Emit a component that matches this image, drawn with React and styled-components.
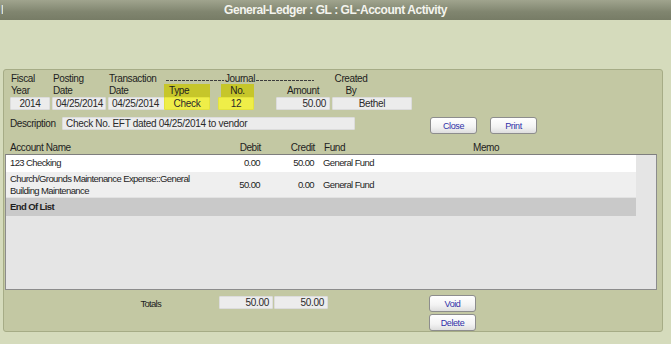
import React from 'react';
import styled, { createGlobalStyle } from 'styled-components';

const GlobalStyle = createGlobalStyle`
  body {
    margin: 0;
    background: #d5dbbc;
    font-family: "Liberation Sans", Arial, sans-serif;
    font-size: 10px;
    letter-spacing: -0.4px;
    color: #1e1e1e;
  }
`;

const TitleBar = styled.div`
  height: 20px;
  display: grid;
  grid-template-columns: 1fr auto 1fr;
  align-items: center;
  background: linear-gradient(#a0a48e, #80856f 60%, #777c66);
  color: #f4f4ee;
  font-weight: bold;
  font-size: 12px;
  letter-spacing: -0.45px;
`;

const Crumb = styled.span`
  justify-self: start;
  padding-left: 1px;
  font-weight: normal;
  overflow: hidden;
`;

const Panel = styled.div`
  margin: 49px 8px 0 3px;
  height: 261px;
  border: 1px solid #a6ac86;
  border-radius: 3px;
  background: #c3c8a3;
  display: flex;
  flex-direction: column;
`;

const FieldGroup = styled.div`
  display: flex;
  padding: 2px 0 0 6px;
`;

const Field = styled.div`
  display: flex;
  flex-direction: column;
  width: ${(p) => p.w}px;
  margin-left: ${(p) => p.gap || 0}px;
`;

const Label = styled.div`
  height: 25px;
  line-height: 12px;
  padding-top: 1px;
  box-sizing: border-box;
  text-align: ${(p) => p.align || 'left'};
  width: ${(p) => (p.lw ? p.lw + 'px' : 'auto')};
  padding-left: ${(p) => p.pl || 0}px;
`;

const LabelLine = styled.div`
  white-space: nowrap;
  text-align: ${(p) => p.align || 'inherit'};
  background: ${(p) => (p.mark ? '#c6c62a' : 'transparent')};
  margin-left: ${(p) => p.ml || 0}px;
  padding-left: ${(p) => p.pl || 0}px;
  padding-top: ${(p) => (p.mark ? 1 : 0)}px;
  height: ${(p) => (p.mark ? 14 : 12)}px;
  margin-top: ${(p) => (p.mark ? -1 : 0)}px;
  box-sizing: border-box;
`;

const Journal = styled.div`
  width: 148px;
  margin-left: 2px;
  display: flex;
  align-items: center;
  gap: 1px;
  &::before,
  &::after {
    content: '';
    flex: 1;
    height: 1px;
    margin-top: 2px;
    background: repeating-linear-gradient(90deg, #3c3c3c 0 3px, transparent 3px 4px);
  }
`;

const Input = styled.div`
  height: 13px;
  line-height: 12px;
  box-sizing: border-box;
  background: ${(p) => (p.mark ? '#efee48' : '#ececec')};
  border: 1px solid ${(p) => (p.mark ? '#e4e33c' : '#dcdcdc')};
  border-radius: 1px;
  padding: 0 3px;
  text-align: ${(p) => p.align || 'left'};
  white-space: nowrap;
  overflow: hidden;
  color: #2a2a2a;
  letter-spacing: -0.3px;
  width: ${(p) => (p.w ? p.w + 'px' : 'auto')};
`;

const DescRow = styled.div`
  display: flex;
  align-items: flex-start;
  padding: 7px 0 0 6px;
`;

const DescLabel = styled.span`
  width: 52px;
  line-height: 13px;
`;

const Button = styled.button`
  width: 47px;
  height: 17px;
  padding: 0;
  margin-left: ${(p) => p.gap || 0}px;
  border: 1px solid #8d8d8d;
  border-radius: 3px;
  background: linear-gradient(#ffffff, #f3f3f3 60%, #dedede);
  font-family: "Liberation Sans", Arial, sans-serif;
  font-size: 9px;
  letter-spacing: -0.4px;
  color: #3030a8;
`;

const HeadRow = styled.div`
  display: grid;
  grid-template-columns: 200px 51px 54px 158px 1fr;
  padding: 8px 0 0 6px;
  height: 12px;
  line-height: 12px;
`;

const Cell = styled.div`
  text-align: ${(p) => p.align || 'left'};
  padding-left: ${(p) => p.pl || 0}px;
  font-weight: ${(p) => (p.bold ? 'bold' : 'normal')};
  white-space: ${(p) => (p.wrap ? 'normal' : 'nowrap')};
`;

const GridBox = styled.div`
  margin: 0 5px 0 1px;
  height: 136px;
  box-sizing: border-box;
  border: 1px solid #8c8c8c;
  border-top-color: #7e7e7e;
  background: #e5e5e5;
`;

const Rows = styled.div`
  width: 630px;
  font-size: 9.5px;
  letter-spacing: -0.6px;
`;

const Row = styled.div`
  display: grid;
  grid-template-columns: 199px 51px 54px 158px 1fr;
  align-items: center;
  height: ${(p) => p.h}px;
  padding-left: 4px;
  background: ${(p) => p.bg};
  border-bottom: 1px solid ${(p) => p.line || 'transparent'};
  line-height: 12px;
`;

const Footer = styled.div`
  display: flex;
  align-items: flex-start;
  padding: 5px 0 0 0;
`;

const TotalsLabel = styled.span`
  width: 157px;
  text-align: right;
  margin-top: 2px;
  line-height: 13px;
  font-size: 9.5px;
  letter-spacing: -0.7px;
`;

const TotalsBox = styled.div`
  display: flex;
  gap: 1px;
  margin: 1px 0 0 58px;
`;

const ButtonStack = styled.div`
  display: flex;
  flex-direction: column;
  gap: 2px;
  margin-left: 101px;
`;

const fields = [
  { key: 'fy', w: 40, l1: 'Fiscal', l2: 'Year', value: '2014', align: 'center' },
  { key: 'pd', w: 54, gap: 2, l1: 'Posting', l2: 'Date', value: '04/25/2014' },
  { key: 'td', w: 57, gap: 2, l1: 'Transaction', l2: 'Date', value: '04/25/2014' },
];

const lines = [
  { key: 'a', h: 16, bg: '#ffffff', name: '123 Checking', debit: '0.00', credit: '50.00', fund: 'General Fund' },
  {
    key: 'b',
    h: 25,
    bg: '#efefef',
    line: '#e2e2e2',
    name: (
      <>
        Church/Grounds Maintenance Expense::General
        <br />
        Building Maintenance
      </>
    ),
    debit: '50.00',
    credit: '0.00',
    fund: 'General Fund',
  },
];

export default function App() {
  return (
    <>
      <GlobalStyle />
      <TitleBar>
        <Crumb>l</Crumb>
        <span>General-Ledger : GL : GL-Account Activity</span>
        <span />
      </TitleBar>
      <Panel>
        <FieldGroup>
          {fields.map((f) => (
            <Field key={f.key} w={f.w} gap={f.gap}>
              <Label pl={1}>
                <LabelLine>{f.l1}</LabelLine>
                <LabelLine>{f.l2}</LabelLine>
              </Label>
              <Input align={f.align}>{f.value}</Input>
            </Field>
          ))}
          <Field w={46} gap={-1}>
            <Label>
              <LabelLine>
                <Journal>Journal</Journal>
              </LabelLine>
              <LabelLine mark pl={5}>Type</LabelLine>
            </Label>
            <Input mark align="center">Check</Input>
          </Field>
          <Field w={36} gap={8}>
            <Label>
              <LabelLine>&nbsp;</LabelLine>
              <LabelLine mark ml={3} align="center">No.</LabelLine>
            </Label>
            <Input mark align="center">12</Input>
          </Field>
          <Field w={54} gap={22}>
            <Label align="center">
              <LabelLine>&nbsp;</LabelLine>
              <LabelLine>Amount</LabelLine>
            </Label>
            <Input align="right">50.00</Input>
          </Field>
          <Field w={80} gap={2}>
            <Label align="center" lw={38}>
              <LabelLine>Created</LabelLine>
              <LabelLine>By</LabelLine>
            </Label>
            <Input align="center">Bethel</Input>
          </Field>
        </FieldGroup>

        <DescRow>
          <DescLabel>Description</DescLabel>
          <Input w={293}>Check No. EFT dated 04/25/2014 to vendor</Input>
          <Button gap={75}>Close</Button>
          <Button gap={13}>Print</Button>
        </DescRow>

        <HeadRow>
          <Cell>Account Name</Cell>
          <Cell align="right">Debit</Cell>
          <Cell align="right">Credit</Cell>
          <Cell pl={9}>Fund</Cell>
          <Cell>Memo</Cell>
        </HeadRow>

        <GridBox>
          <Rows>
            {lines.map((r) => (
              <Row key={r.key} h={r.h} bg={r.bg} line={r.line}>
                <Cell wrap>{r.name}</Cell>
                <Cell align="right">{r.debit}</Cell>
                <Cell align="right">{r.credit}</Cell>
                <Cell pl={9}>{r.fund}</Cell>
                <Cell />
              </Row>
            ))}
            <Row h={17} bg="#c9c9c9">
              <Cell bold>End Of List</Cell>
            </Row>
          </Rows>
        </GridBox>

        <Footer>
          <TotalsLabel>Totals</TotalsLabel>
          <TotalsBox>
            <Input w={54} align="right">50.00</Input>
            <Input w={54} align="right">50.00</Input>
          </TotalsBox>
          <ButtonStack>
            <Button>Void</Button>
            <Button>Delete</Button>
          </ButtonStack>
        </Footer>
      </Panel>
    </>
  );
}
